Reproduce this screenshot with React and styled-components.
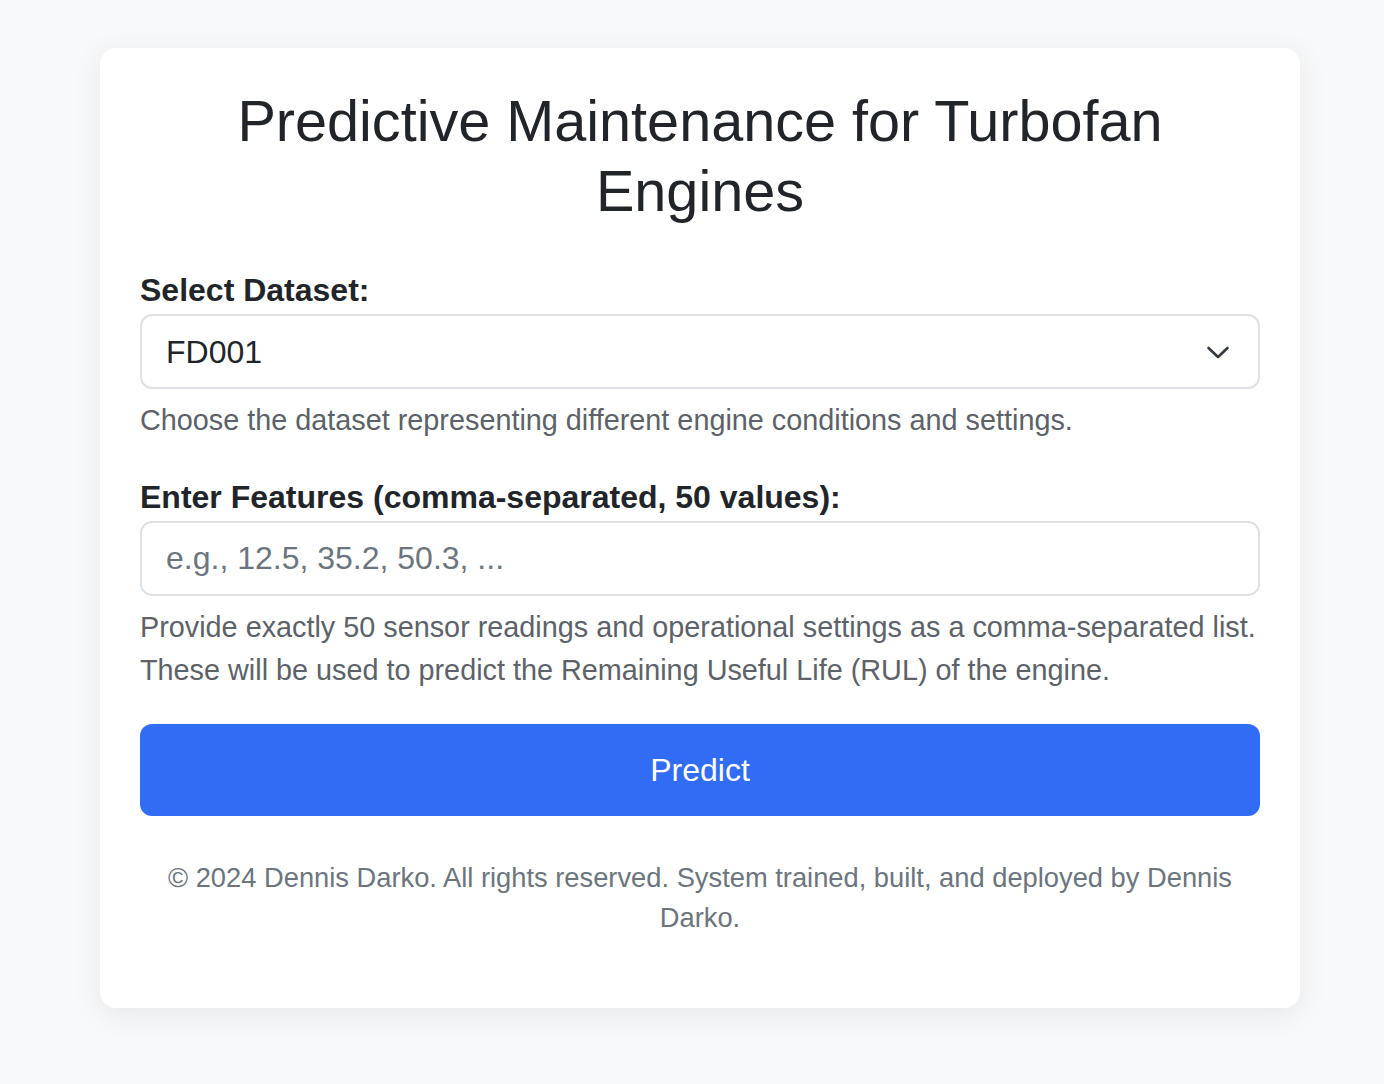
import React, { useState } from "react";
import styled, { createGlobalStyle } from "styled-components";

const GlobalStyle = createGlobalStyle`
  * { box-sizing: border-box; }
  body {
    margin: 0;
    background: #f8f9fa;
    font-family: "Liberation Sans", Arial, Helvetica, sans-serif;
    color: #212529;
  }
`;

const Page = styled.div`
  min-height: 1084px;
  padding: 48px 84px 76px 100px;
`;

const Card = styled.div`
  width: 1200px;
  background: #ffffff;
  border-radius: 16px;
  box-shadow: 0 6px 30px rgba(0, 0, 0, 0.08);
  padding: 38px 40px 70px;
  display: flex;
  flex-direction: column;
`;

const Title = styled.h1`
  margin: 0 0 45px;
  font-size: 57.6px;
  line-height: 70px;
  font-weight: 400;
  text-align: center;
  color: #212529;
`;

const Group = styled.div`
  display: flex;
  flex-direction: column;
  margin-bottom: ${(p) => p.gap || 36}px;
`;

const Label = styled.label`
  font-size: 32px;
  line-height: 38px;
  font-weight: 700;
  margin-bottom: 5px;
`;

const Field = styled.div`
  position: relative;
`;

const Select = styled.select`
  width: 100%;
  height: 75px;
  border: 2px solid #dee2e6;
  border-radius: 12px;
  padding: 0 70px 0 24px;
  font-family: inherit;
  font-size: 32px;
  color: #212529;
  background: #fff;
  appearance: none;
  outline: none;
`;

const Chevron = styled.svg`
  position: absolute;
  right: 30px;
  top: 50%;
  transform: translateY(-50%);
  pointer-events: none;
`;

const Input = styled.input`
  width: 100%;
  height: 75px;
  border: 2px solid #dee2e6;
  border-radius: 12px;
  padding: 0 24px;
  font-family: inherit;
  font-size: 32px;
  color: #212529;
  outline: none;
  &::placeholder {
    color: #6c757d;
  }
`;

const Help = styled.div`
  margin-top: 10px;
  font-size: 28.8px;
  line-height: 43px;
  color: #5c6268;
`;

const Button = styled.button`
  height: 92px;
  border: none;
  border-radius: 12px;
  background: #316cf4;
  color: #fff;
  font-family: inherit;
  font-size: 32px;
  cursor: pointer;
`;

const Footer = styled.p`
  margin: 42px 0 0;
  text-align: center;
  font-size: 27.3px;
  line-height: 40px;
  color: #6c757d;
`;

export default function App() {
  const [dataset, setDataset] = useState("FD001");
  const [features, setFeatures] = useState("");

  return (
    <>
      <GlobalStyle />
      <Page>
        <Card>
          <Title>Predictive Maintenance for Turbofan Engines</Title>
          <Group>
            <Label htmlFor="dataset">Select Dataset:</Label>
            <Field>
              <Select
                id="dataset"
                value={dataset}
                onChange={(e) => setDataset(e.target.value)}
              >
                <option>FD001</option>
                <option>FD002</option>
                <option>FD003</option>
                <option>FD004</option>
              </Select>
              <Chevron width="24" height="24" viewBox="0 0 24 24">
                <path
                  d="M2.5 8l9.5 9 9.5-9"
                  fill="none"
                  stroke="#343a40"
                  strokeWidth="2.6"
                  strokeLinecap="round"
                  strokeLinejoin="round"
                />
              </Chevron>
            </Field>
            <Help>
              Choose the dataset representing different engine conditions and
              settings.
            </Help>
          </Group>
          <Group gap={32}>
            <Label htmlFor="features">
              Enter Features (comma-separated, 50 values):
            </Label>
            <Input
              id="features"
              placeholder="e.g., 12.5, 35.2, 50.3, ..."
              value={features}
              onChange={(e) => setFeatures(e.target.value)}
            />
            <Help>
              Provide exactly 50 sensor readings and operational settings as a
              comma-separated list. These will be used to predict the Remaining
              Useful Life (RUL) of the engine.
            </Help>
          </Group>
          <Button>Predict</Button>
          <Footer>
            © 2024 Dennis Darko. All rights reserved. System trained, built, and
            deployed by Dennis Darko.
          </Footer>
        </Card>
      </Page>
    </>
  );
}
